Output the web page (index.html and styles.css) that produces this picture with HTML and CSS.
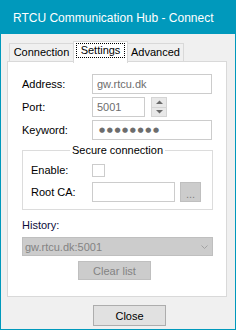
FILE: index.html
```html
<!DOCTYPE html>
<html lang="en">

<head>
    <meta charset="UTF-8">
    <title>RTCU Communication Hub - Connect</title>
    <link rel="stylesheet" href="styles.css">
</head>

<body>
    <div class="window">
        <div class="titlebar">RTCU Communication Hub - Connect</div>
        <div class="client">
            <div class="tabs">
                <div class="tab tab-first">Connection</div>
                <div class="tab tab-active"><span class="tab-focus">Settings</span></div>
                <div class="tab tab-last">Advanced</div>
            </div>
            <div class="panel">
                <div class="row">
                    <span class="label">Address:</span>
                    <div class="input input-wide">gw.rtcu.dk</div>
                </div>
                <div class="row">
                    <span class="label">Port:</span>
                    <div class="input input-port">5001</div>
                    <div class="spinner">
                        <div class="spinner-half">
                            <svg width="7" height="4" viewBox="0 0 7 4"><path d="M0 4 L3.5 0.5 L7 4 Z" fill="#6a6a6a" /></svg>
                        </div>
                        <div class="spinner-half spinner-down">
                            <svg width="7" height="4" viewBox="0 0 7 4"><path d="M0 0 L3.5 3.5 L7 0 Z" fill="#6a6a6a" /></svg>
                        </div>
                    </div>
                </div>
                <div class="row">
                    <span class="label">Keyword:</span>
                    <div class="input input-wide input-pass">●●●●●●●●</div>
                </div>

                <div class="group">
                    <div class="group-title"><span>Secure connection</span></div>
                    <div class="group-row">
                        <span class="label label-group">Enable:</span>
                        <div class="checkbox"></div>
                    </div>
                    <div class="group-row">
                        <span class="label label-group">Root CA:</span>
                        <div class="input input-ca"></div>
                        <div class="btn btn-disabled btn-browse">...</div>
                    </div>
                </div>

                <div class="history-label">History:</div>
                <div class="combo">
                    <span>gw.rtcu.dk:5001</span>
                    <svg width="7" height="4" viewBox="0 0 7 4"><polyline points="0.5,0.5 3.5,3.5 6.5,0.5" fill="none" stroke="#a2a2a2" stroke-width="1" /></svg>
                </div>
                <div class="btn btn-disabled btn-clear">Clear list</div>
            </div>
            <div class="footer">
                <div class="btn btn-close">Close</div>
            </div>
        </div>
    </div>
</body>

</html>
```

FILE: styles.css
```css
body {
    margin: 0;
    font-family: "Liberation Sans", Arial, sans-serif;
    font-size: 11px;
    color: #000;
}

.window {
    width: 236px;
    height: 330px;
    box-sizing: border-box;
    border: 1px solid #0099bc;
    background-color: #f0f0f0;
    display: flex;
    flex-direction: column;
}

.titlebar {
    height: 33px;
    flex-shrink: 0;
    display: flex;
    align-items: center;
    padding-left: 12px;
    background-color: #0099bc;
    color: #fff;
    font-size: 12px;
}

.client {
    flex: 1;
    padding: 7px 8px 0 6px;
}

/* tabs */
.tabs {
    display: flex;
    align-items: flex-end;
    height: 20px;
    margin-left: 2px;
}

.tab {
    box-sizing: border-box;
    height: 18px;
    border: 1px solid #d9d9d9;
    border-bottom: none;
    background-color: #f0f0f0;
    line-height: 16px;
    text-align: center;
}

.tab-first {
    width: 64px;
    border-right: none;
}

.tab-last {
    width: 56px;
    border-left: none;
}

.tab-active {
    position: relative;
    z-index: 1;
    width: 55px;
    height: 22px;
    margin-bottom: -2px;
    padding-top: 1px;
    background-color: #fff;
    display: flex;
    justify-content: center;
    align-items: flex-start;
}

.tab-focus {
    display: block;
    line-height: 13px;
    padding: 0 4px;
    border: 1px dotted #000;
}

/* settings page */
.panel {
    width: 220px;
    box-sizing: border-box;
    border: 1px solid #d9d9d9;
    background-color: #fff;
    padding: 12px 0 16px 14px;
}

.row {
    display: flex;
    align-items: center;
    height: 20px;
}

.row + .row {
    margin-top: 3px;
}

.label {
    width: 70px;
    flex-shrink: 0;
}

.label-group {
    width: 61px;
}

.input {
    box-sizing: border-box;
    height: 20px;
    border: 1px solid #cccccc;
    padding: 0 4px;
    line-height: 18px;
    color: #6d6d6d;
    background-color: #fff;
    white-space: nowrap;
    overflow: hidden;
}

.input-wide {
    width: 120px;
}

.input-port {
    width: 53px;
}

.input-pass {
    font-family: "DejaVu Sans", sans-serif;
    font-size: 7px;
    letter-spacing: 1.6px;
    padding-left: 6px;
}

.input-ca {
    width: 83px;
}

.spinner {
    margin-left: 6px;
    width: 16px;
    height: 20px;
    box-sizing: border-box;
    display: flex;
    flex-direction: column;
}

.spinner-half {
    flex: 1;
    display: flex;
    align-items: center;
    justify-content: center;
    background-color: #e8e8e8;
    border: 1px solid #d4d4d4;
}

.spinner-down {
    border-top: none;
}

.group {
    width: 191px;
    box-sizing: border-box;
    margin-top: 10px;
    border: 1px solid #dcdcdc;
    padding-bottom: 7px;
}

.group-title {
    margin-top: -8px;
    line-height: 15px;
    text-align: center;
}

.group-title span {
    background-color: #fff;
    padding: 0 2px;
}

.group-row {
    display: flex;
    align-items: center;
    height: 20px;
    margin-top: 2px;
    padding-left: 8px;
}

.checkbox {
    width: 13px;
    height: 13px;
    box-sizing: border-box;
    border: 1px solid #cccccc;
    background-color: #fff;
}

.btn {
    box-sizing: border-box;
    display: flex;
    align-items: center;
    justify-content: center;
}

.btn-disabled {
    background-color: #cccccc;
    border: 1px solid #bfbfbf;
    color: #838383;
}

.btn-browse {
    margin-left: 5px;
    width: 21px;
    height: 20px;
    padding-top: 3px;
}

.history-label {
    margin-top: 8px;
    line-height: 15px;
    color: #0c0c3c;
}

.combo {
    margin-top: 4px;
    width: 191px;
    height: 19px;
    box-sizing: border-box;
    display: flex;
    align-items: center;
    justify-content: space-between;
    padding: 0 4px 0 2px;
    background-color: #cccccc;
    border: 1px solid #bfbfbf;
    color: #838383;
}

.btn-clear {
    margin-top: 5px;
    margin-left: 56px;
    width: 73px;
    height: 19px;
}

.footer {
    padding-top: 8px;
}

.btn-close {
    margin-left: 86px;
    width: 73px;
    height: 21px;
    background-color: #e1e1e1;
    border: 1px solid #adadad;
}
```
